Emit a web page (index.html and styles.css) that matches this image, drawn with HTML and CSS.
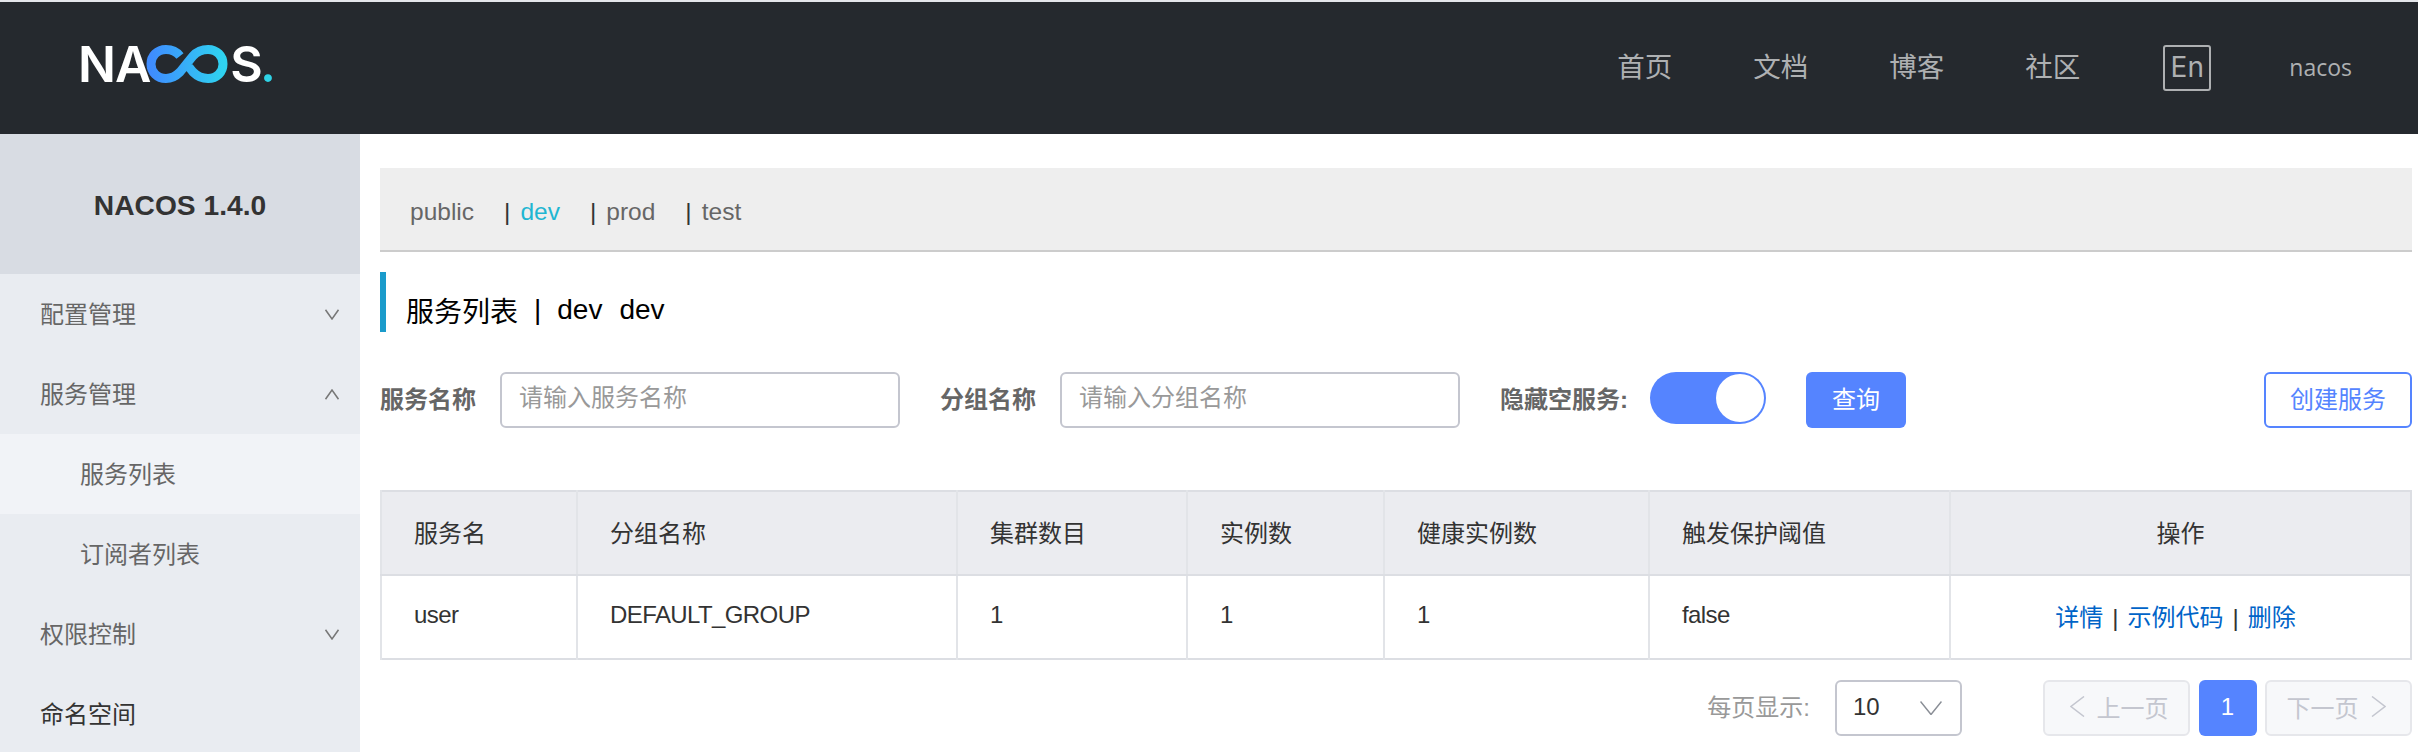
FILE: index.html
```html
<!DOCTYPE html>
<html lang="zh-CN">
<head>
<meta charset="utf-8">
<title>Nacos</title>
<link rel="stylesheet" href="styles.css">
</head>
<body>
<header class="topbar">
  <div class="logo">
    <span class="logo-text">NA</span>
    <svg class="logo-mark" viewBox="0 0 82 38" width="82" height="38" aria-hidden="true">
      <defs><linearGradient id="lg" x1="0" x2="1" y1="0" y2="0"><stop offset="0" stop-color="#3f8cff"/><stop offset="1" stop-color="#2fd3f0"/></linearGradient></defs>
      <path d="M34 11C30 6 26 4.500 20 4.500C11 4.500 5 11 5 19C5 27 11 33.500 20 33.500C26 33.500 30 31 34 27L47 11C51 6.500 56 4.500 62 4.500C71 4.500 77 11 77 19C77 27 71 33.500 62 33.500C56 33.500 51 31 47 27L43 22" fill="none" stroke="url(#lg)" stroke-width="9"/>
    </svg>
    <span class="logo-text">S</span><span class="logo-text logo-dot">.</span>
  </div>
  <nav class="topnav">
    <a class="nav-link">首页</a><a class="nav-link">文档</a><a class="nav-link">博客</a><a class="nav-link">社区</a>
    <span class="lang">En</span>
    <span class="user">nacos</span>
  </nav>
</header>
<div class="layout">
  <aside class="sidebar">
    <div class="brand">NACOS 1.4.0</div>
    <div class="menu-item"><span>配置管理</span><svg class="chev" viewBox="0 0 14 11" width="14" height="11"><path d="M.5 .8 7 10 13.500 .8"/></svg></div>
    <div class="menu-item"><span>服务管理</span><svg class="chev" viewBox="0 0 14 11" width="14" height="11"><path d="M.5 10.200 7 1 13.500 10.200"/></svg></div>
    <div class="menu-item sub active"><span>服务列表</span></div>
    <div class="menu-item sub"><span>订阅者列表</span></div>
    <div class="menu-item"><span>权限控制</span><svg class="chev" viewBox="0 0 14 11" width="14" height="11"><path d="M.5 .8 7 10 13.500 .8"/></svg></div>
    <div class="menu-item dark"><span>命名空间</span></div>
  </aside>
  <main class="content">
    <div class="tabs">
      <span class="tab">public</span><span class="sep">|</span>
      <span class="tab current">dev</span><span class="sep">|</span>
      <span class="tab">prod</span><span class="sep">|</span>
      <span class="tab">test</span>
    </div>
    <h1 class="title"><span>服务列表</span><span class="title-sep">|</span><span>dev</span><span class="title-ns">dev</span></h1>
    <div class="filters">
      <label class="field-label">服务名称</label>
      <input class="field" placeholder="请输入服务名称">
      <label class="field-label second">分组名称</label>
      <input class="field" placeholder="请输入分组名称">
      <label class="field-label third">隐藏空服务:</label>
      <span class="toggle"><span class="knob"></span></span>
      <button class="btn primary">查询</button>
      <button class="btn outline">创建服务</button>
    </div>
    <table class="grid">
      <thead>
        <tr><th class="c1">服务名</th><th class="c2">分组名称</th><th class="c3">集群数目</th><th class="c4">实例数</th><th class="c5">健康实例数</th><th class="c6">触发保护阈值</th><th class="c7">操作</th></tr>
      </thead>
      <tbody>
        <tr><td>user</td><td>DEFAULT_GROUP</td><td>1</td><td>1</td><td>1</td><td>false</td><td class="ops"><a>详情</a><span class="op-sep">|</span><a>示例代码</a><span class="op-sep">|</span><a>删除</a></td></tr>
      </tbody>
    </table>
    <div class="pager">
      <span class="page-label">每页显示:</span>
      <span class="select"><span>10</span><svg class="sel-chev" viewBox="0 0 22 14" width="22" height="14"><path d="M.5 .5 11 13.500 21.500 .5"/></svg></span>
      <span class="page-btn prev"><svg class="pg-chev" viewBox="0 0 15 21" width="15" height="21"><path d="M14 .5 1 10.500 14 20.500"/></svg>上一页</span>
      <span class="page-num">1</span>
      <span class="page-btn next">下一页<svg class="pg-chev" viewBox="0 0 15 21" width="15" height="21"><path d="M1 .5 14 10.500 1 20.500"/></svg></span>
    </div>
  </main>
</div>
</body>
</html>
```
FILE: styles.css
```css
* { box-sizing: border-box; }
html, body { margin: 0; height: 752px; overflow: hidden; }
body {
  background: #fff;
  border-top: 2px solid #e4e6ea;
  font-family: "Liberation Sans", "Noto Sans CJK SC", sans-serif;
  font-size: 24px;
  color: #333;
}
.topbar {
  height: 132px;
  background: #25292e;
  display: flex;
  align-items: center;
  justify-content: space-between;
  padding: 0 66px 0 78px;
}
.logo { display: flex; align-items: center; height: 38px; margin-top: -8px; }
.logo-text { font-family: Inter, sans-serif; font-weight: 600; font-size: 50px; letter-spacing: -1px; line-height: 38px; color: #fff; }
.logo-mark { margin: 0 2px 0 -4px; flex: none; }
.logo-dot { color: #2fd3e6; margin-left: -2px; }
.topnav { display: flex; align-items: center; gap: 81px; color: #aeb0b2; font-size: 27.500px; }
.nav-link { padding-bottom: 6px; }
.lang {
  width: 48px; height: 46px; padding-bottom: 2px; margin-left: 2px;
  border: 2px solid #aeb0b2; border-radius: 3px;
  display: flex; align-items: center; justify-content: center;
  font-family: Inter, sans-serif; font-size: 28px; font-weight: 400;
}
.user { font-family: "Open Sans", sans-serif; font-size: 23px; font-weight: 500; padding-bottom: 3px; margin-left: -3px; }
.layout { display: flex; height: 618px; }
.sidebar { width: 360px; flex: none; background: #e9ecf1; }
.brand {
  height: 140px; background: #d8dce3; padding-top: 2px;
  display: flex; align-items: center; justify-content: center;
  font-size: 28.200px; font-weight: 700; color: #333;
}
.menu-item {
  height: 80px; padding: 0 21px 0 40px;
  display: flex; align-items: center; justify-content: space-between;
  color: #666;
}
.menu-item span { padding-bottom: 3px; }
.menu-item.sub { padding-left: 80px; }
.menu-item.active { background: #f1f3f7; }
.menu-item.dark { color: #333; }
.chev { fill: none; stroke: #777; stroke-width: 1.500; }
.content { flex: 1; padding: 34px 6px 0 20px; min-width: 0; }
.tabs {
  height: 84px; background: #eee; border-bottom: 2px solid #ccc;
  display: flex; align-items: center; padding: 5px 0 0 30px; color: #666;
  font-size: 24.500px;
}
.tab { margin-right: 30px; }
.sep { margin-right: 10px; color: #333; }
.tab.current { color: #1fb6d2; }
.title {
  margin: 20px 0 0; height: 60px;
  border-left: 6px solid #1a9bcb; padding: 16px 0 0 20px;
  display: flex; align-items: center;
  font-size: 28px; font-weight: 400; color: #000;
}
.title-sep { margin: 0 16px; }
.title-ns { margin-left: 17px; }
.filters { margin-top: 40px; height: 56px; display: flex; align-items: center; }
.field-label { font-weight: 700; color: #666; margin-right: 24px; white-space: nowrap; padding-bottom: 6px; }
.field-label.second { margin-left: 40px; }
.field-label.third { margin-left: 40px; margin-right: 22px; }
.field {
  width: 400px; height: 56px; padding: 0 17px 4px;
  border: 2px solid #c4c6cf; border-radius: 6px; outline: none;
  font: inherit; color: #333; background: #fff;
}
.field::placeholder { color: #999; }
.toggle {
  width: 116px; height: 52px; margin-top: -4px; border-radius: 26px; background: #5584ff;
  display: flex; justify-content: flex-end; align-items: center; padding-right: 2px;
}
.knob { width: 48px; height: 48px; border-radius: 50%; background: #fff; }
.btn {
  height: 56px; border-radius: 6px; font: inherit; padding: 0 0 5px;
}
.btn.primary { width: 100px; margin-left: 40px; background: #5584ff; border: 0; color: #fff; }
.btn.outline { width: 148px; margin-left: auto; background: #fff; border: 2px solid #5584ff; color: #5584ff; }
.grid {
  margin-top: 62px; width: 2032px; table-layout: fixed;
  border-collapse: collapse; border: 2px solid #dcdee3;
}
.grid th, .grid td {
  height: 84px; padding: 0 0 4px 32px; text-align: left; font-weight: 400;
  border-left: 2px solid #e2e4e8; color: #333;
}
.grid td { letter-spacing: -.6px; }
.grid th { background: #ebecf0; border-bottom: 2px solid #dcdee3; }
.c1 { width: 196px; }
.c2 { width: 380px; }
.c3 { width: 230px; }
.c4 { width: 197px; }
.c5 { width: 265px; }
.c6 { width: 301px; }
.grid .c7 { text-align: center; padding-left: 0; }
.grid .ops { text-align: center; padding: 0 10px 4px 0; letter-spacing: 0; }
.ops a { color: #0064c8; }
.op-sep { margin: 0 9px; }
.pager { margin-top: 20px; display: flex; align-items: center; height: 56px; justify-content: flex-end; }
.page-label { color: #999; margin-right: 25px; padding-bottom: 5px; }
.select {
  width: 127px; height: 56px; border: 2px solid #c4c6cf; border-radius: 6px;
  display: flex; align-items: center; justify-content: space-between;
  padding: 0 18px 0 16px; color: #333; margin-right: 81px;
}
.select span { padding-bottom: 3px; }
.sel-chev, .pg-chev { fill: none; stroke: #8a8e96; stroke-width: 1.500; flex: none; }
.pg-chev { stroke: #c4c6cf; }
.page-btn {
  width: 147px; height: 56px; background: #f7f8fa; border: 2px solid #e6e7eb; border-radius: 6px;
  display: flex; align-items: center; justify-content: center; gap: 12px; color: #c4c6cf;
  padding-bottom: 4px;
}
.page-btn.prev { padding-left: 5px; }
.page-btn.next { padding-right: 5px; }
.page-num {
  width: 58px; height: 56px; margin: 0 8.500px; background: #5584ff; color: #fff; border-radius: 6px;
  display: flex; align-items: center; justify-content: center; padding-bottom: 3px;
}
```
